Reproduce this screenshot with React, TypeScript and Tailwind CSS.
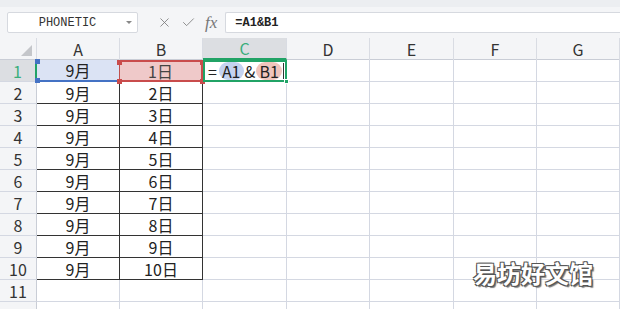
import { X, Check } from 'lucide-react';

const cols = ['A', 'B', 'C', 'D', 'E', 'F', 'G'];
const grid = 'grid grid-cols-[37px_83px_83px_84px_83px_84px_83px_83px] grid-rows-[22px] h-[22px] leading-none';

function Corner({ className }: { className: string }) {
    return <span className={`absolute size-[5px] ${className}`} />;
}

export default function App() {
    const rows = Array.from({ length: 12 }, (_, i) => i + 1);

    return (
        <div className="w-[620px] h-[309px] overflow-hidden bg-white relative font-['Noto_Sans_CJK_SC','Liberation_Sans',sans-serif] text-[#222]">
            {/* Formula bar */}
            <div className="h-[38px] bg-[#f4f5f7] border-t-[7px] border-[#eceef1] flex items-center pl-[7px]">
                <div className="w-[131px] h-[21px] bg-white border border-[#d6d9df] rounded-[2px] flex items-center relative">
                    <span className="flex-1 text-center font-['Liberation_Mono',monospace] text-[12px] text-[#333] pr-[10px]">PHONETIC</span>
                    <span className="absolute right-[5px] top-[8px] border-x-[3px] border-x-transparent border-t-[3px] border-t-[#888]" />
                </div>
                <div className="flex items-center gap-[9px] ml-[19px] text-[#777]">
                    <X size={15} strokeWidth={1.3} />
                    <Check size={15} strokeWidth={1.3} />
                    <span className="font-['Liberation_Serif',serif] italic text-[17px] leading-none">fx</span>
                </div>
                <div className="flex-1 h-[21px] ml-[8px] bg-white border-y border-l border-[#d6d9df] rounded-l-[2px] flex items-center pl-[9px] font-['Liberation_Mono',monospace] text-[12px] font-bold text-[#222]">
                    =A1&amp;B1
                </div>
            </div>

            {/* Column headers */}
            <div className={`${grid} bg-[#f4f5f7] border-b border-[#c9cdd6]`}>
                <div className="relative border-r border-[#d9dce3]">
                    <svg className="absolute right-[4px] bottom-[4px]" width="11" height="11" viewBox="0 0 11 11">
                        <polygon points="11,0 11,11 0,11" fill="#c4c6ca" />
                    </svg>
                </div>
                {cols.map((c) => (
                    <div
                        key={c}
                        className={
                            c === 'C'
                                ? 'flex items-center justify-center text-[16px] bg-[#dcdee2] text-[#3aae7c] border-b-2 border-[#21a366] border-r border-r-[#d9dce3]'
                                : 'flex items-center justify-center text-[16px] text-[#333] border-r border-[#d9dce3]'
                        }
                    >
                        {c}
                    </div>
                ))}
            </div>

            {/* Rows */}
            {rows.map((r) => (
                <div key={r} className={grid}>
                    <div
                        className={
                            r === 1
                                ? 'flex items-center justify-center text-[16px] bg-[#dcdee2] text-[#3aae7c] border-r-2 border-[#21a366] border-b border-b-[#d4d8e2]'
                                : 'flex items-center justify-center text-[16px] bg-[#f4f5f7] text-[#333] border-r border-[#c9cdd6] border-b border-b-[#d4d8e2]'
                        }
                    >
                        {r <= 11 ? r : ''}
                    </div>

                    {/* A */}
                    {r === 1 ? (
                        <div className="relative flex items-center justify-center text-[16px] bg-[#dbe3f4] border-b-2 border-[#4472c4] border-r border-r-[#c0504d]">
                            9月
                            <Corner className="bg-[#4472c4] -left-[2px] -top-[1px]" />
                            <Corner className="bg-[#4472c4] -left-[2px] -bottom-[3px]" />
                        </div>
                    ) : r <= 10 ? (
                        <div className="flex items-center justify-center text-[16px] border-b border-[#333] border-r border-r-[#333]">9月</div>
                    ) : (
                        <div className="border-b border-[#d4d8e2] border-r border-r-[#d4d8e2]" />
                    )}

                    {/* B */}
                    {r === 1 ? (
                        <div className="relative flex items-center justify-center text-[16px] text-[#444] bg-[#efc9c9] border-2 border-l-0 border-[#c94c4c]">
                            1日
                            <Corner className="bg-[#c94c4c] -left-[3px] -top-[2px]" />
                            <Corner className="bg-[#c94c4c] -left-[3px] -bottom-[4px]" />
                            <Corner className="bg-[#c94c4c] -right-[4px] -top-[2px]" />
                            <Corner className="bg-[#c94c4c] -right-[4px] -bottom-[4px]" />
                        </div>
                    ) : r <= 10 ? (
                        <div className="flex items-center justify-center text-[16px] border-b border-[#333] border-r border-r-[#333]">{r}日</div>
                    ) : (
                        <div className="border-b border-[#d4d8e2] border-r border-r-[#d4d8e2]" />
                    )}

                    {/* C */}
                    {r === 1 ? (
                        <div className="relative flex items-center pl-[3px] text-[16px] border-2 border-[#21a366]">
                            <span>=</span>
                            <span className="ml-[2px] px-[3px] rounded-full bg-[#c5d3f0] leading-[18px]">A1</span>
                            <span className="mx-[1px]">&amp;</span>
                            <span className="px-[3px] rounded-full bg-[#f0c5bc] leading-[18px]">B1</span>
                            <span className="ml-[1px] w-px h-[16px] bg-[#333]" />
                            <Corner className="bg-[#21a366] -right-[4px] -bottom-[4px] border border-white" />
                        </div>
                    ) : (
                        <div className="border-b border-[#d4d8e2] border-r border-r-[#d4d8e2]" />
                    )}

                    {cols.slice(3).map((c) => (
                        <div key={c} className="border-b border-[#d4d8e2] border-r border-r-[#d4d8e2]" />
                    ))}
                </div>
            ))}

            {/* Watermark */}
            <div className="absolute left-[473px] top-[261px] text-[24px] font-bold leading-none text-white [text-shadow:-1px_-1px_0_#555,1px_-1px_0_#555,-1px_1px_0_#555,1px_1px_0_#555,2px_2px_1px_#777]">
                易坊好文馆
            </div>
        </div>
    );
}
